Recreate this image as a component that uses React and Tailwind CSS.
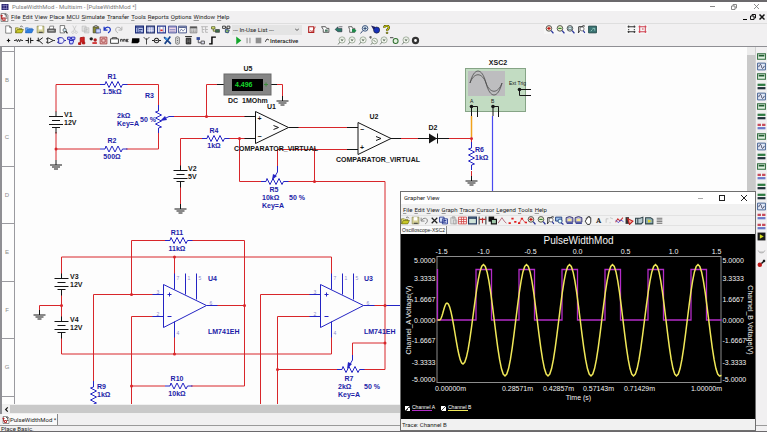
import React from "react";

/* ---------- toolbar glyphs, drawn on a 16 x 16 grid ---------- */

const glyphs = {
  page: <path d="M3 1.5h7l3 3v10H3z M10 1.5v3h3" fill="#fff" stroke="#333" />,
  open: (
    <>
      <path d="M1 14V5h5l1 1h5v3" fill="#e8e070" stroke="#555500" />
      <path d="M1 14l3-6h11l-3 6z" fill="#c8c828" stroke="#555500" />
      <path d="M9 3c2-2 4-1 5 1" fill="none" stroke="#222" />
    </>
  ),
  openBlue: (
    <>
      <path d="M1 14V5h5l1 1h6v3" fill="#7fb2ee" stroke="#1f5fb8" />
      <path d="M1 14l3-6h11l-3 6z" fill="#2f7fe0" stroke="#1f5fb8" />
    </>
  ),
  save: (
    <>
      <path d="M2 2h12v12H2z" fill="#d8d49a" stroke="#77773a" />
      <path d="M5 2h6v6H5z" fill="#fff" />
      <path d="M5 12h7v2H5z" fill="#444" />
    </>
  ),
  print: (
    <>
      <path d="M4 7l1-5h7l-1 5" fill="#fff" stroke="#333" />
      <path d="M1 7h14v6H1z" fill="#777" stroke="#222" />
      <path d="M3 10h9" stroke="#eee" />
    </>
  ),
  preview: (
    <>
      <path d="M2 1h8v13H2z" fill="#fff" stroke="#222" />
      <circle cx="10" cy="9" r="3" fill="#cfe9f5" stroke="#222" />
      <path d="M12 11l3 4" stroke="#222" strokeWidth="2" />
    </>
  ),
  cut: <path d="M5 1l5 10M11 1L6 11M5 11a2 2 0 1 0 .1 0M11 11a2 2 0 1 0 .1 0" fill="none" stroke="#b5b5b5" />,
  copyGrey: <path d="M2 2h7v9H2zM6 5h8v9H6zM8 8h4M8 11h4" fill="#e4e4e4" stroke="#b0b0b0" />,
  copy: <path d="M1 2h8v9H1zM6 5h9v9H6zM8 8h5M8 11h5" fill="#dfe8ff" stroke="#1d2f8a" strokeWidth="1.5" />,
  paste: (
    <>
      <path d="M2 3h10v11H2z" fill="#8a8a30" stroke="#33331a" />
      <path d="M5 1h4v3H5z" fill="#ddd" stroke="#333" />
      <path d="M7 7h8v7H7z" fill="#ccd6ff" stroke="#1d2f8a" />
    </>
  ),
  undo: <path d="M2 3v6h6M3 8c2-6 11-5 10 1c0 2-2 4-4 5" fill="none" stroke="#1a34c4" strokeWidth="2.2" />,
  undoGrey: <path d="M2 3v6h6M3 8c2-6 11-5 10 1c0 2-2 4-4 5" fill="none" stroke="#777" strokeWidth="1.5" />,
  redo: <path d="M14 3v6H8M13 8c-2-6-11-5-10 1c0 2 2 4 4 5" fill="none" stroke="#aaa" strokeWidth="1.6" />,
  winBlue: (
    <>
      <path d="M1 2h14v12H1z" fill="#b8c6ee" stroke="#1c2c78" strokeWidth="2" />
      <path d="M1 4h14M5 5v9M7 8h6M7 11h4" stroke="#1c2c78" strokeWidth="1.5" />
    </>
  ),
  appIcon: (
    <>
      <path d="M1 2h14v12H1z" fill="#2b2670" />
      <path d="M3 5h10M3 11h10M6 3v10M11 3v10" stroke="#8c88c4" strokeWidth="1.4" />
    </>
  ),
  winSheet: (
    <>
      <path d="M1 2h14v12H1z" fill="#8f9ad0" stroke="#26346e" strokeWidth="2" />
      <path d="M2 7h12M2 10h12M6 4v9M10 4v9" stroke="#fff" />
    </>
  ),
  winRed: (
    <>
      <path d="M1 2h14v12H1z" fill="#fff" stroke="#2a3a90" strokeWidth="2" />
      <path d="M5 3v11M11 3v11" stroke="#2a3a90" />
      <path d="M6 8h4v3H6z" fill="#d22" />
    </>
  ),
  winPink: (
    <>
      <path d="M1 2h14v12H1z" fill="#ecd6e6" stroke="#2a3a90" strokeWidth="1.5" />
      <path d="M2 4h12M3 8h10M3 11h10" stroke="#5a63b0" />
    </>
  ),
  winGraph: (
    <>
      <path d="M1 2h14v12H1z" fill="#fff" stroke="#30407a" strokeWidth="1.5" />
      <path d="M2 4h12" stroke="#30407a" strokeWidth="2" />
      <path d="M3 12l3-5 3 4 4-5" fill="none" stroke="#30407a" />
    </>
  ),
  calc: (
    <>
      <path d="M2 3h12v11H2z" fill="#ddd" stroke="#555" />
      <path d="M2 3h12v3H2z" fill="#555" />
      <path d="M4 9h8M4 12h8" stroke="#555" strokeDasharray="2 1" />
    </>
  ),
  treeGrey: <path d="M2 3h12M4 3v5h4M10 3v10M4 8v5h3M10 8h4M10 13h4" fill="none" stroke="#b0b0b0" strokeWidth="1.5" />,
  partGreen: (
    <>
      <path d="M1 3h6v4H1zM4 7v4h4" fill="#e4e87a" stroke="#44531a" strokeWidth="1.3" />
      <path d="M8 8h7v5H8z" fill="#3d6e4e" stroke="#222" />
    </>
  ),
  partLink: (
    <>
      <path d="M1 2h5v4H1zM6 4l4 3M9 2h5v4H9z" fill="#fff" stroke="#222" strokeWidth="1.5" />
      <path d="M6 8l7 1-2 5-5-1z" fill="#8dbb6a" stroke="#223c7a" strokeWidth="1.5" />
    </>
  ),
  erc: (
    <>
      <path d="M3 3h9v10H3z" fill="#fff" stroke="#b02020" strokeWidth="2" />
      <path d="M6 9l3 3 6-9" fill="none" stroke="#c03030" strokeWidth="1.5" />
    </>
  ),
  design: (
    <>
      <path d="M2 1h9l3 3v11H2z" fill="#fff" stroke="#555" strokeWidth="1.2" />
      <path d="M1 5h4M3 3v8M5 9h4v4H5z" fill="none" stroke="#b02020" strokeWidth="1.8" />
      <path d="M8 3h3v4M10 9h3" fill="none" stroke="#222" strokeWidth="1.4" />
    </>
  ),
  transfer: (
    <>
      <path d="M1 3h7l2 3h4v7H4V8z" fill="#fff" stroke="#333" strokeWidth="1.4" />
      <path d="M7 8h5v4H7z" fill="#4f7a66" />
    </>
  ),
  transferGreen: (
    <>
      <path d="M2 8l5-5v3h7v6H7z" fill="#2a7a68" stroke="#223" />
      <path d="M9 3h6" stroke="#223" />
    </>
  ),
  transferRight: (
    <>
      <path d="M1 3h6l1 3h4v7H3V8z" fill="#fff" stroke="#333" strokeWidth="1.3" />
      <path d="M7 7h5l3 3-3 3H7z" fill="#1f8a4a" />
    </>
  ),
  find: (
    <>
      <circle cx="9" cy="6" r="5" fill="#e6f3f8" stroke="#223c6a" strokeWidth="1.5" />
      <path d="M6 6h6M9 3v6M5 10l-4 5" stroke="#223c6a" strokeWidth="1.6" />
    </>
  ),
  globe: (
    <>
      <path d="M0 1l7 2 1 4-4 1z" fill="#226" />
      <circle cx="10" cy="9" r="5.5" fill="#1730b8" stroke="#112" />
    </>
  ),
  help: (
    <>
      <path d="M4 5c0-5 9-5 8 0c0 3-3 2-3 5" fill="none" stroke="#3c3c00" strokeWidth="4" />
      <path d="M4 5c0-5 9-5 8 0c0 3-3 2-3 5" fill="none" stroke="#cccc10" strokeWidth="2" />
      <circle cx="9" cy="14" r="1.6" fill="#aaaa10" stroke="#3c3c00" />
    </>
  ),
  zoomIn: (
    <>
      <circle cx="7" cy="6" r="5" fill="#f4eed8" stroke="#333" strokeWidth="1.4" />
      <path d="M4 6h6M7 3v6" stroke="#c01818" strokeWidth="2" />
      <path d="M11 10l4 5" stroke="#26309a" strokeWidth="2.4" />
    </>
  ),
  zoomOut: (
    <>
      <circle cx="7" cy="6" r="5" fill="#eef4cc" stroke="#333" strokeWidth="1.4" />
      <path d="M4 6h6" stroke="#2c7a2c" strokeWidth="2" />
      <path d="M11 10l4 5" stroke="#26309a" strokeWidth="2.4" />
    </>
  ),
  zoomArea: (
    <>
      <circle cx="7" cy="6" r="5" fill="#ddeaf0" stroke="#333" strokeWidth="1.4" />
      <path d="M4 4h6v4H4z" fill="none" stroke="#355" />
      <path d="M11 10l4 5" stroke="#26309a" strokeWidth="2.4" />
    </>
  ),
  zoomPage: (
    <>
      <path d="M3 14V3h8M10 1l4 1M2 14l3-4" fill="none" stroke="#222" strokeWidth="1.6" />
      <circle cx="9" cy="7" r="3.6" fill="#fff" stroke="#222" />
      <path d="M11 10l3 4" stroke="#26309a" strokeWidth="2" />
    </>
  ),
  fullscreen: (
    <>
      <path d="M1 2h14v12H1z" fill="#3b7474" stroke="#1d4444" strokeWidth="1.5" />
      <path d="M8 6h4M12 6v4M5 11l3-3" stroke="#cfe" />
    </>
  ),
  pinsDark: <path d="M1 3h14M1 12h14M3 1v4M13 1v4M3 7v2M13 7v2M3 10v4M13 10v4" stroke="#333" strokeWidth="1.8" />,
  pinsRed: <path d="M1 3h14M1 12h14M3 1v13M13 1v13M7 7h3" stroke="#d04050" strokeWidth="1.8" />,
  source: <path d="M8 5v6M5 8h6" stroke="#111" strokeWidth="2" />,
  resistor: <path d="M0 8h3l1-2 2 4 2-4 2 4 2-4 1 2h3" fill="none" stroke="#111" strokeWidth="1.5" />,
  capacitor: <path d="M1 8h5M6 3v10M10 3v10M10 8h5" stroke="#111" strokeWidth="1.7" />,
  diode: <path d="M12 3L5 8l7 6M4 3v7M5 8H1" fill="none" stroke="#111" strokeWidth="1.7" />,
  opamp: <path d="M3 3l10 5-10 5zM0 5h3M0 11h3M13 8h3" fill="#fff" stroke="#111" strokeWidth="1.5" />,
  gate: <path d="M3 3h5c6 1 6 9 0 10H3zM0 5h3M0 11h3M13 8h3" fill="#eef" stroke="#1818a8" strokeWidth="1.6" />,
  gates: <path d="M1 2h5v4H1zM8 2h6v4H8zM4 8h8l-2 6H5z" fill="#cdd4ff" stroke="#2424b8" strokeWidth="1.7" />,
  note: <path d="M4 12V3l7-1v9M1 12h4v3H1zM8 11h4v3H8z" fill="#c22" stroke="#a11" strokeWidth="1.6" />,
  dots: (
    <>
      <circle cx="4" cy="5" r="3" fill="#222" />
      <circle cx="11" cy="7" r="3" fill="#a22" />
      <path d="M6 11h8v3H6z" fill="#c22" />
    </>
  ),
  chipRed: <path d="M2 2h12v12H2zM5 5h6v6H5z" fill="#f0caca" stroke="#a03838" strokeWidth="1.5" />,
  box: <path d="M1 5h14v8H1zM4 5V3h8v2" fill="#fff" stroke="#333" strokeWidth="1.6" />,
  misc: <path d="M1 10V6h3v4M6 10V6h3v4M11 10V6h4M11 8h3M11 10h4" fill="none" stroke="#222" strokeWidth="1.5" />,
  chipBlack: <path d="M2 4h13v6l-3 3H1z" fill="#000" />,
  antenna: <path d="M8 15V4M3 2l5 5 5-5" fill="none" stroke="#333" strokeWidth="1.6" />,
  motor: <path d="M0 8h4M12 8h4M8 4a4 4 0 1 0 .1 0M6 8h4" fill="none" stroke="#222" strokeWidth="1.8" />,
  ni: (
    <>
      <path d="M2 2l12 12M13 1L3 14" stroke="#18428a" strokeWidth="3" />
      <path d="M4 3h4v4H4z" fill="#3c9ae8" />
    </>
  ),
  connector: <path d="M5 3c0-2 6-2 6 0v10c0 2-6 2-6 0zM7 5h2M7 8h2M7 11h2" fill="#fff" stroke="#444" strokeWidth="1.4" />,
  mcu: <path d="M2 1h12M4 4h8v10H4zM6 7h4M6 11h4" fill="#777" stroke="#111" strokeWidth="1.6" />,
  hierarchy: (
    <>
      <path d="M1 2h6v5H1z" fill="#334a9a" />
      <path d="M4 7v5h5M9 9h6v5H9z" fill="#dde" stroke="#444" strokeWidth="1.5" />
    </>
  ),
  bus: <path d="M2 14h5V2h7" fill="none" stroke="#000" strokeWidth="2.6" />,
  play: <path d="M4 1v14l9-7z" fill="#12a52a" />,
  pause: <path d="M4 3h3v10H4zM9 3h3v10H9z" fill="#b5b5b5" />,
  stop: <path d="M3 3h10v10H3z" fill="#8e8e8e" />,
  probe: (
    <>
      <circle cx="9" cy="7" r="5.5" fill="#f2f6ee" stroke="#8a9a86" strokeWidth="1.3" />
      <path d="M5 11l-3 4M7 5l2 4 2-4" fill="none" stroke="#4a5a4a" strokeWidth="1.3" />
    </>
  ),
  probeDiff: (
    <>
      <path d="M0 2h5M3 0v5" stroke="#444" strokeWidth="1.4" />
      <circle cx="10" cy="9" r="5" fill="#f2f6ee" stroke="#7a8a76" strokeWidth="1.3" />
      <path d="M6 13l-3 2M8 7l4 4" stroke="#4a5a4a" strokeWidth="1.3" />
    </>
  ),
  probeRef: (
    <>
      <path d="M0 3h6" stroke="#333" strokeWidth="1.6" />
      <circle cx="10" cy="9" r="4.4" fill="#e4f2e0" stroke="#2e6e2e" strokeWidth="1.8" />
    </>
  ),
  gear: <circle cx="8" cy="8" r="4.5" fill="#fff" stroke="#333" strokeWidth="4" />,
  xMark: <path d="M3 3l10 10M13 3L3 13" stroke="#222" strokeWidth="2.2" />,
  pasteGrey: <path d="M3 3h9v11H3zM6 1h4v3H6zM8 7h6v7H8z" fill="#ddd" stroke="#999" />,
  gridRed: <path d="M1 2h14v12H1zM1 6h14M1 10h14M6 2v12M10 2v12" fill="#fff" stroke="#d03a3a" strokeWidth="1.4" />,
  legend: (
    <>
      <path d="M1 2h14v12H1z" fill="#cfe2d8" stroke="#243a5e" strokeWidth="2" />
      <path d="M1 4h14" stroke="#243a5e" strokeWidth="2" />
    </>
  ),
  cursors: (
    <>
      <path d="M2 1v14M14 1v14" stroke="#222" strokeWidth="1.7" />
      <path d="M2 6h12M8 3v10" stroke="#b33" strokeWidth="2" />
    </>
  ),
  invert: (
    <>
      <path d="M1 1h10v9H1z" fill="#111" />
      <path d="M6 6h9v8H6z" fill="#9fc8a8" stroke="#111" strokeWidth="2" />
    </>
  ),
  trace: <path d="M0 13L7 3l4 6 4 4" fill="none" stroke="#b06070" strokeWidth="1.6" />,
  points: <path d="M1 11h4v3H1zM6 3h4v3H6zM11 9h4v3h-4z" fill="#e02020" />,
  tracePoints: (
    <>
      <path d="M2 13L7 4l4 6 4 2" fill="none" stroke="#e02020" strokeWidth="1.2" />
      <path d="M5 3h4v3H5zM0 11h4v3H0zM12 10h4v3h-4z" fill="#e02020" />
    </>
  ),
  zoomX: (
    <>
      <path d="M1 2h11v7H1z" fill="#9cc0e8" stroke="#1d3a7a" strokeWidth="1.6" />
      <circle cx="9" cy="9" r="3.6" fill="#dff" stroke="#1d3a7a" strokeWidth="1.5" />
      <path d="M11 12l4 3" stroke="#26309a" strokeWidth="2" />
    </>
  ),
  zoomY: (
    <>
      <path d="M2 3l6-2 6 2v8H2z" fill="#b8b6d8" stroke="#2a2a6a" strokeWidth="1.6" />
      <path d="M5 5h6v4H5z" fill="#f6e78a" />
      <path d="M3 13h11" stroke="#26309a" strokeWidth="2" />
    </>
  ),
  hand: <path d="M4 7V4h2V2h2V1h2v2h2v8l-2 4H6l-4-6z" fill="#fff" stroke="#222" strokeWidth="1.6" />,
  letterLine: <path d="M2 12V5h4M9 3l5 2M8 12h2" fill="none" stroke="#bbb" strokeWidth="1.4" />,
  waves: (
    <>
      <path d="M1 11l4-6 4 4 5-6" fill="none" stroke="#c33" strokeWidth="1.8" />
      <path d="M1 7l5 5 4-5 5 3" fill="none" stroke="#44c" strokeWidth="1.5" />
    </>
  ),
  exportRed: (
    <>
      <path d="M1 2h6v12H1z" fill="#333" />
      <path d="M5 5l9 4-6 6z" fill="#f6b6a6" stroke="#c22020" strokeWidth="2" />
    </>
  ),
  exportGrey: <path d="M1 4h8l5-2v9l-3 3H1zM5 4v10" fill="#b9cbd0" stroke="#2f4248" strokeWidth="1.8" />,
  exportYellow: (
    <>
      <path d="M1 3h9l4 3v8H1z" fill="#8fb0b4" stroke="#2f4248" strokeWidth="1.8" />
      <path d="M5 6l7 3-6 3z" fill="#e8d820" />
    </>
  ),
  list: <path d="M3 4h10M3 7h10M3 10h10M3 13h10" stroke="#666" strokeWidth="1.6" />,
  meter: (
    <>
      <path d="M1 3h14v10H1z" fill="#dff0e0" stroke="#2f6a3c" strokeWidth="1.8" />
      <path d="M3 5h10v3H3z" fill="#1f5a2e" />
    </>
  ),
  bars: (
    <>
      <path d="M1 3h14v4H1z" fill="#2d7a42" />
      <path d="M1 9h14v4H1z" fill="#20303a" />
    </>
  ),
  scope: (
    <>
      <path d="M1 2h14v12H1z" fill="#dfe7f6" stroke="#3a5a8c" strokeWidth="1.6" />
      <path d="M3 9c2-6 4-6 5-1s3 4 5-1" fill="none" stroke="#224" strokeWidth="1.4" />
    </>
  ),
  analyzer: (
    <>
      <path d="M1 3h6v4H1zM9 3h6v4H9z" fill="#c84a5a" />
      <path d="M1 9h14v4H1z" fill="#6a7ac8" />
    </>
  ),
  labview: (
    <>
      <path d="M1 1h14v14H1z" fill="#1a1a1a" />
      <path d="M5 4v8l7-4z" fill="#d8e020" />
    </>
  ),
  clip: <path d="M2 6c2 6 10 6 12 0M4 9h8" fill="none" stroke="#aaa" strokeWidth="1.5" />,
  currentProbe: (
    <>
      <circle cx="5" cy="10" r="4" fill="#c01818" />
      <path d="M8 8l6-6M11 2l3 3" stroke="#111" strokeWidth="2.6" />
    </>
  ),
};

function Glyph({ name, className = "h-[9px] w-[9px]" }) {
  return (
    <svg viewBox="0 0 16 16" className={`${className} shrink-0`} aria-hidden="true">
      {glyphs[name]}
    </svg>
  );
}

function Tools({ names, className }) {
  return (
    <div className={`flex shrink-0 items-center ${className}`}>
      {names.map((name, i) => (
        <button key={i} type="button" aria-label={name} className="flex min-w-0 flex-1 items-center justify-center">
          <Glyph name={name} />
        </button>
      ))}
    </div>
  );
}

function MenuBar({ items, className }) {
  return (
    <nav className={`flex items-center gap-[2px] ${className}`}>
      {items.map((item) => (
        <button key={item} type="button" className="shrink-0">
          <span className="underline decoration-[#999] decoration-1">{item[0]}</span>
          {item.slice(1)}
        </button>
      ))}
    </nav>
  );
}

/* ---------- schematic parts ---------- */

const RED = "#d8262a";
const BLUE = "#2424c4";
const INK = "#151515";

const Wire = ({ d, color = RED }) => <path d={d} fill="none" stroke={color} />;
const Dot = ({ x, y }) => <circle cx={x} cy={y} r="1.5" fill={RED} />;

function Label({ x, y, children, color = "#1c1ca8", middle }) {
  return (
    <text x={x} y={y} fill={color} textAnchor={middle ? "middle" : "start"} stroke="none">
      {children}
    </text>
  );
}

function ResistorH({ x, y }) {
  return <path d={`M${x} ${y}h5l1 -3l3 6l3 -6l3 6l3 -6l3 6l1.500 -3h5`} fill="none" stroke={BLUE} />;
}

function ResistorV({ x, y }) {
  return <path d={`M${x} ${y}v6l-3 1l6 3l-6 3l6 3l-6 3l6 3l-3 1v5`} fill="none" stroke={BLUE} />;
}

function Battery({ x, y }) {
  return (
    <path
      d={`M${x} ${y - 5}v5M${x - 7} ${y}h14M${x - 4} ${y + 4}h8M${x - 7} ${y + 8}h14M${x - 4} ${y + 11}h8M${x} ${y + 11}v6`}
      fill="none"
      stroke={INK}
    />
  );
}

function Ground({ x, y }) {
  return <path d={`M${x} ${y - 5}v5M${x - 6} ${y}h12M${x - 4} ${y + 2}h8M${x - 2} ${y + 4}h4`} fill="none" stroke={INK} />;
}

function Comparator({ x, y, top, bottom }) {
  return (
    <g stroke={INK} fill="none">
      <path d={`M${x} ${y - 16}v32l33 -16zM${x - 11} ${y - 11}h11M${x - 11} ${y + 11}h11M${x + 33} ${y}h10M${x + 18} ${y - 2}l5 2l-5 2`} />
      <Label x={x + 2} y={y - 7} color={INK}>{top}</Label>
      <Label x={x + 2} y={y + 11} color={INK}>{bottom}</Label>
    </g>
  );
}

function OpAmp({ x, y }) {
  return (
    <g stroke={BLUE} fill="none">
      <path
        d={`M${x} ${y - 21}v43l43 -22zM${x - 11} ${y - 11}h11M${x - 11} ${y + 11}h11M${x + 43} ${y}h11M${x + 11} ${y - 32}v16M${x + 22} ${y - 32}v21M${x + 33} ${y - 32}v26M${x + 11} ${y + 16}v16`}
      />
      <path d={`M${x + 4} ${y - 11}h4M${x + 6} ${y - 13}v4M${x + 4} ${y + 11}h4`} />
      <g className="text-[5px] font-normal" stroke="none" fill="#8a8ad0">
        <text x={x + 13} y={y - 26}>7</text>
        <text x={x + 24} y={y - 26}>1</text>
        <text x={x + 35} y={y - 26}>5</text>
        <text x={x - 7} y={y - 12}>3</text>
        <text x={x - 7} y={y + 10}>2</text>
        <text x={x + 13} y={y + 29}>4</text>
        <text x={x + 46} y={y - 1}>6</text>
      </g>
    </g>
  );
}

const rulerMarks = [
  [51, "B"],
  [108, "C"],
  [166, "D"],
  [223, "E"],
  [281, "F"],
  [338, "G"],
];

function Schematic() {
  return (
    <svg viewBox="2 47 745 357" className="block h-[357px] w-[745px] shrink-0 font-['Liberation_Sans',sans-serif] text-[7px] font-bold" role="img" aria-label="Circuit schematic">
      <g stroke="#9a9a9f">
        <path d="M14.500 47v357" />
        <path d="M2 51.500h12M2 108.500h12M2 166.500h12M2 223.500h12M2 281.500h12M2 338.500h12M2 396.500h12" />
      </g>
      <g fill="#8a8a8a" className="text-[6px] font-normal">
        {rulerMarks.map(([y, name]) => (
          <text key={name} x="7" y={y + 31} textAnchor="middle">{name}</text>
        ))}
      </g>

      {/* divider */}
      <Wire d="M56 112V84.500H100M126 84.500H158.500V106M56 132V160M56 149H100M126 149H158.500V131" />
      <Battery x={56} y={116.5} />
      <Ground x={56} y={165} />
      <Dot x={56} y={149} />
      <ResistorH x={100} y={84.5} />
      <ResistorH x={100} y={149} />
      <ResistorV x={158.5} y={105} />
      <path d="M174 116.500h-5l-4 2" fill="none" stroke={BLUE} />
      <path d="M160 121l5 -5l2 4z" fill={BLUE} />
      <Label x={112} y={79} middle>R1</Label>
      <Label x={112} y={94} middle>1.5kΩ</Label>
      <Label x={145} y={98}>R3</Label>
      <Label x={117} y={118}>2kΩ</Label>
      <Label x={117} y={126}>Key=A</Label>
      <Label x={140} y={122}>50 %</Label>
      <Label x={112} y={143} middle>R2</Label>
      <Label x={112} y={159} middle>500Ω</Label>
      <Label x={64} y={117} color={INK}>V1</Label>
      <Label x={64} y={125} color={INK}>12V</Label>

      {/* voltmeter */}
      <Wire d="M174 116.500H245M206.500 116.500V84.500H217M277 84.500H282.500V96" />
      <Wire d="M217 84.500h7M271 84.500h6" color={INK} />
      <Dot x={206.5} y={116.5} />
      <rect x="224" y="74" width="47" height="21" fill="#858585" stroke="#6a6a6a" />
      <rect x="232" y="79" width="31" height="12" fill="#000" />
      <text x="235" y="87" fill="#18d82c" className="text-[7px]">4.496</text>
      <path d="M264 84.500h4M266 82.500v4" stroke="#3c8a3c" />
      <Ground x={282.5} y={101} />
      <Label x={248} y={71} color={INK} middle>U5</Label>
      <Label x={228} y={103} color={INK}>DC&#160; 1MOhm</Label>
      <Label x={267} y={109} color={INK}>U1</Label>

      {/* comparators */}
      <Wire d="M180.500 166V138.500H202M228 138.500H245M239.500 138.500V181.500H261M287 181.500H385V369.500H363M277.500 166V149.500H347M314.500 149.500V181.500M298 127.500H347M401 138.500H418M449 138.500H471.500V143M471.500 171V177M180.500 187V204" />
      <Battery x={180.5} y={170.5} />
      <Ground x={180.5} y={209} />
      <ResistorH x={202} y={138.5} />
      <Dot x={239.5} y={138.5} />
      <Dot x={314.5} y={149.5} />
      <Dot x={314.5} y={181.5} />
      <Dot x={471.5} y={138.5} />
      <Comparator x={255.500} y={127.500} top="+" bottom="−" />
      <Comparator x={358} y={138.500} top="−" bottom="+" />
      <ResistorH x={261} y={181.5} />
      <path d="M277.500 166v6l-3 5" fill="none" stroke={BLUE} />
      <path d="M272 180l1 -6l4 2z" fill={BLUE} />
      <Label x={214} y={133} middle>R4</Label>
      <Label x={214} y={148} middle>1kΩ</Label>
      <Label x={188} y={171} color={INK}>V2</Label>
      <Label x={188} y={179} color={INK}>5V</Label>
      <Label x={234} y={151} color={INK}>COMPARATOR_VIRTUAL</Label>
      <Label x={374} y={119} color={INK} middle>U2</Label>
      <Label x={336} y={162} color={INK}>COMPARATOR_VIRTUAL</Label>
      <Label x={274} y={192} middle>R5</Label>
      <Label x={262} y={200}>10kΩ</Label>
      <Label x={289} y={200}>50 %</Label>
      <Label x={262} y={208}>Key=A</Label>

      {/* diode, load and oscilloscope */}
      <Wire d="M418 138.500H449M437.500 133.500v10" color={INK} />
      <path d="M429 133.500v10l8 -5z" fill={INK} />
      <ResistorV x={471.5} y={142} />
      <Ground x={471.5} y={181} />
      <Label x={433} y={130} color={INK} middle>D2</Label>
      <Label x={475} y={152}>R6</Label>
      <Label x={475} y={160}>1kΩ</Label>
      <Label x={498} y={65} color={INK} middle>XSC2</Label>
      <rect x="465.500" y="68.500" width="60" height="43" fill="#c2dcc2" stroke="#86a486" />
      <rect x="468" y="71" width="37" height="25" fill="#bdbdbf" />
      <path d="M470 83c4 -16 12 -16 16 0s12 16 16 0M470 83c4 -11 12 -11 16 0s12 11 16 0" fill="none" stroke="#4a4a4a" strokeWidth="0.800" />
      <g className="text-[5px] font-normal" fill={INK}>
        <text x="509" y="85">Ext Trig</text>
        <text x="470" y="103">A</text>
        <text x="491" y="103">B</text>
      </g>
      <path d="M531 89.500H519.500V95.500H531M471.500 106V116M473 106.500h4.500V117M493 106V116M494 106.500h4.500V117" fill="none" stroke={INK} />
      <circle cx="471.500" cy="106.500" r="1.800" fill={INK} />
      <circle cx="493" cy="106.500" r="1.800" fill={INK} />
      <circle cx="519.500" cy="89.500" r="1.800" fill={INK} />
      <path d="M471.500 116V137" stroke="#f0a21c" strokeWidth="1.500" />
      <path d="M492.500 116V192" stroke="#4a4af0" strokeWidth="1.200" />

      {/* dual supply */}
      <Wire d="M61.500 274V257H331.500V274M61.500 294V317M61.500 305.500H39.500V310M61.500 338V354H331.500V337M174.500 257V274M174.500 337V354" />
      <Battery x={61.5} y={278.5} />
      <Battery x={61.5} y={321.5} />
      <Ground x={39.5} y={315} />
      <Dot x={61.5} y={305.5} />
      <Dot x={174.5} y={257} />
      <Dot x={174.5} y={354} />
      <Label x={70} y={279} color={INK}>V3</Label>
      <Label x={70} y={287} color={INK}>12V</Label>
      <Label x={70} y={322} color={INK}>V4</Label>
      <Label x={70} y={330} color={INK}>12V</Label>

      {/* first op-amp stage */}
      <Wire d="M165 240.500H131.500V294.500M191 240.500H244.500V386H191M153 294.500H93.500V382M153 316.500H131.500V404M131.500 386H165M217 305.500H244.500" />
      <OpAmp x={163.500} y={305.500} />
      <ResistorH x={165} y={240.5} />
      <ResistorH x={165} y={386} />
      <ResistorV x={93.5} y={381} />
      <Dot x={131.5} y={294.5} />
      <Dot x={244.5} y={305.5} />
      <Dot x={131.5} y={386} />
      <Label x={177} y={235} middle>R11</Label>
      <Label x={177} y={251} middle>11kΩ</Label>
      <Label x={208} y={281}>U4</Label>
      <Label x={208} y={334}>LM741EH</Label>
      <Label x={177} y={381} middle>R10</Label>
      <Label x={177} y={396} middle>10kΩ</Label>
      <Label x={97} y={389}>R9</Label>
      <Label x={97} y={397}>1kΩ</Label>

      {/* second op-amp stage */}
      <Wire d="M310 294.500H260.500V404M310 316.500H277.500V404M277.500 369.500H337M352.500 355V343H385M374 305.500H385" />
      <Wire d="M385 305.500H402" color={BLUE} />
      <OpAmp x={320.500} y={305.500} />
      <ResistorH x={337} y={369.5} />
      <path d="M352.500 355v5l-3 5" fill="none" stroke={BLUE} />
      <path d="M347 369l1 -7l4 2z" fill={BLUE} />
      <Dot x={277.5} y={369.5} />
      <Dot x={385} y={305.5} />
      <Dot x={385} y={343} />
      <Label x={364} y={281}>U3</Label>
      <Label x={364} y={334}>LM741EH</Label>
      <Label x={349} y={381} middle>R7</Label>
      <Label x={338} y={389}>2kΩ</Label>
      <Label x={364} y={389}>50 %</Label>
      <Label x={338} y={397}>Key=A</Label>
    </svg>
  );
}

/* ---------- grapher ---------- */

const turningPoints = [
  [437, 320], [439, 320], [446.5, 303], [462.5, 364], [483, 264.5], [504.5, 376],
  [526, 264.5], [547.5, 376], [569, 264.5], [590.5, 376], [612, 264.5],
  [633, 376], [655, 264.5], [676, 376], [697.5, 264.5], [719, 376], [721, 375.5],
];

function waveform() {
  const pts = [];
  for (let i = 0; i < turningPoints.length - 1; i++) {
    const [x0, y0] = turningPoints[i];
    const [x1, y1] = turningPoints[i + 1];
    for (let s = 0; s <= 12; s++) {
      const t = s / 12;
      pts.push(`${(x0 + (x1 - x0) * t).toFixed(2)},${(y0 + ((y1 - y0) * (1 - Math.cos(Math.PI * t))) / 2).toFixed(2)}`);
    }
  }
  return pts.join(" ");
}

const pulses = [475.5, 518.5, 561.5, 604.5, 647.5, 690.5].map((x) => `H${x}V269.5H${x + 15.5}V320`).join("");

const topTicks = [["-1.5", 441], ["-1.0", 483], ["-0.5", 530], ["0.0", 577], ["0.5", 625], ["1.0", 673], ["1.5", 716]];
const sideTicks = [["5.0000", 263], ["3.3333", 281], ["1.6667", 302], ["0.0000", 323], ["-1.6667", 343], ["-3.3333", 365], ["-5.0000", 382]];
const timeTicks = [["0.00000m", 450], ["0.28571m", 517], ["0.42857m", 558], ["0.57143m", 598], ["0.71429m", 639], ["1.00000m", 706]];

function Plot() {
  return (
    <svg viewBox="401 234 353 168" className="block h-[168px] w-full font-['Liberation_Sans',sans-serif] text-[7px]" fill="#f2f2f2" role="img" aria-label="PulseWidthMod plot">
      <text x="578" y="244" textAnchor="middle" className="text-[10px]">PulseWidthMod</text>
      {topTicks.map(([t, x]) => (
        <text key={t} x={x} y="254" textAnchor="middle">{t}</text>
      ))}
      {sideTicks.map(([t, y]) => (
        <g key={t}>
          <text x="435" y={y} textAnchor="end">{t}</text>
          <text x="722" y={y}>{t}</text>
        </g>
      ))}
      {timeTicks.map(([t, x]) => (
        <text key={t} x={x} y="391" textAnchor="middle">{t}</text>
      ))}
      <text x="578" y="400" textAnchor="middle">Time (s)</text>
      <text textAnchor="middle" transform="translate(410 320) rotate(-90)">Channel_A Voltage(V)</text>
      <text textAnchor="middle" transform="translate(747 320) rotate(90)">Channel_B Voltage(V)</text>
      <rect x="436.500" y="256.500" width="284" height="126" fill="none" stroke="#8c8c8c" />
      <path d={`M437 269V320${pulses}H721`} fill="none" stroke="#b42cc8" strokeWidth="1.300" />
      <polyline points={waveform()} fill="none" stroke="#f0e858" strokeWidth="1.500" />
    </svg>
  );
}

function Channel({ id, label, line }) {
  return (
    <div className="flex w-[36px] items-center gap-[2px]">
      <input
        id={id}
        type="checkbox"
        defaultChecked
        className="h-[5px] w-[5px] shrink-0 appearance-none bg-white checked:bg-[linear-gradient(135deg,#fff_45%,#444_45%,#444_60%,#fff_60%)]"
      />
      <label htmlFor={id} className="font-['Liberation_Sans',sans-serif] text-[5px] leading-[5px] whitespace-nowrap text-white">
        {label}
        <span className={`block h-px w-[20px] ${line}`} />
      </label>
    </div>
  );
}

function Grapher() {
  return (
    <section className="absolute top-[189px] right-[11px] bottom-px left-[400px] flex flex-col border border-[#6f6f6f] bg-[#f1f1f1]" aria-label="Grapher View">
      <header className="flex h-[12px] shrink-0 items-center bg-white pl-[3px]">
        <h2 className="flex-1">Grapher View</h2>
        <button type="button" aria-label="Minimize" className="flex w-[22px] justify-center">
          <span className="h-px w-[5px] bg-[#aaa]" />
        </button>
        <button type="button" aria-label="Maximize" className="flex w-[22px] justify-center">
          <span className="h-[6px] w-[6px] border border-[#222]" />
        </button>
        <button type="button" aria-label="Close" className="flex w-[22px] justify-center">
          <svg viewBox="0 0 6 6" className="h-[6px] w-[6px]"><path d="M0 0l6 6M6 0L0 6" stroke="#222" /></svg>
        </button>
      </header>
      <MenuBar className="h-[11px] shrink-0 pl-[2px]" items={["File", "Edit", "View", "Graph", "Trace", "Cursor", "Legend", "Tools", "Help"]} />
      <div className="flex h-[11px] shrink-0 items-center border-y border-[#e2e2e2]">
        <Tools className="w-[57px]" names={["open", "save", "undoGrey", "xMark", "copy", "pasteGrey"]} />
        <Tools className="w-[39px]" names={["gridRed", "legend", "cursors", "invert"]} />
        <Tools className="w-[30px]" names={["trace", "points", "tracePoints"]} />
        <Tools className="w-[66px]" names={["zoomIn", "zoomOut", "zoomPage", "zoomX", "zoomY", "zoomY", "hand"]} />
        <button type="button" aria-label="Text" className="w-[11px] font-serif text-[8px] leading-[9px] font-bold">A</button>
        <Tools className="w-[30px]" names={["letterLine", "waves", "exportRed"]} />
        <Tools className="w-[20px]" names={["exportGrey", "exportYellow"]} />
        <Tools className="w-[10px]" names={["list"]} />
      </div>
      <div className="flex h-[8px] shrink-0 items-center">
        <button type="button" className="h-[8px] border-r border-[#888] bg-[#fafafa] px-px font-['Liberation_Sans',sans-serif] text-[5px] leading-[8px]">Oscilloscope-XSC2</button>
      </div>
      <div className="flex min-h-0 flex-1 flex-col bg-black">
        <Plot />
        <div className="flex items-center pt-[3px] pl-[4px]">
          <Channel id="channel-a" label="Channel A" line="bg-[#b42cc8]" />
          <Channel id="channel-b" label="Channel B" line="bg-[#f0e858]" />
        </div>
      </div>
      <footer className="h-[11px] shrink-0 pl-px leading-[12px]">Trace: Channel B</footer>
    </section>
  );
}

/* ---------- main window ---------- */

const instruments = [
  "meter", "scope", "meter", "bars", "scope", "meter", "bars", "analyzer", "meter", "scope",
  "bars", "meter", "analyzer", "bars", "bars", "scope", "analyzer", "analyzer", "labview",
];

export default function App() {
  return (
    <div className="relative flex h-screen flex-col overflow-hidden border-t-2 border-[#6b696c] bg-[#f1f0f1] font-[Roboto,'Liberation_Sans',sans-serif] text-[6px] leading-[8px] text-[#222]">
      <header className="flex h-[9px] shrink-0 items-center bg-white pl-px">
        <Glyph name="appIcon" className="h-[8px] w-[8px]" />
        <h1 className="flex-1 pl-[3px] text-[#777]">PulseWidthMod - Multisim - [PulseWidthMod *]</h1>
        <button type="button" aria-label="Minimize" className="flex w-[22px] justify-center">
          <span className="h-px w-[5px] bg-[#888]" />
        </button>
        <button type="button" aria-label="Restore" className="flex w-[22px] justify-center">
          <svg viewBox="0 0 6 6" className="h-[6px] w-[6px]"><path d="M.5 2h3.500v3.500H.5zM2 2V.5h3.500V4H4" fill="none" stroke="#888" /></svg>
        </button>
        <button type="button" aria-label="Close" className="flex w-[22px] justify-center">
          <svg viewBox="0 0 6 6" className="h-[5px] w-[5px]"><path d="M0 0l6 6M6 0L0 6" stroke="#777" /></svg>
        </button>
      </header>

      <div className="flex h-[12px] shrink-0 items-center">
        <Glyph name="design" />
        <MenuBar
          className="flex-1 pl-[2px]"
          items={["File", "Edit", "View", "Place", "MCU", "Simulate", "Transfer", "Tools", "Reports", "Options", "Window", "Help"]}
        />
        <div className="flex items-end gap-[3px] pr-[2px]">
          <button type="button" aria-label="Minimize document" className="h-px w-[4px] bg-black" />
          <button type="button" aria-label="Restore document">
            <svg viewBox="0 0 6 6" className="h-[6px] w-[6px]"><path d="M.5 2h3.500v3.500H.5zM2 2V.5h3.500V4H4" fill="none" stroke="#111" /></svg>
          </button>
          <button type="button" aria-label="Close document">
            <svg viewBox="0 0 6 6" className="h-[6px] w-[6px]"><path d="M.5 .5l5 5M5.500 .5l-5 5" stroke="#111" strokeWidth="1.500" /></svg>
          </button>
        </div>
      </div>

      <div className="flex h-[12px] shrink-0 items-center border-t border-[#dedede] pl-[3px]">
        <Tools className="w-[43px]" names={["page", "open", "openBlue", "save"]} />
        <Tools className="w-[23px]" names={["print", "preview"]} />
        <Tools className="w-[55px]" names={["cut", "copyGrey", "paste", "undo", "redo"]} />
        <Tools className="ml-[10px] w-[76px]" names={["winBlue", "winSheet", "winRed", "winPink", "winGraph", "calc", "treeGrey"]} />
        <Tools className="w-[22px]" names={["partGreen", "partLink"]} />
        <div className="relative flex w-[70px] shrink-0 items-center">
          <select aria-label="In-use list" className="h-[10px] w-full appearance-none bg-[#e4e4e4] pl-px">
            <option>--- In-Use List ---</option>
          </select>
          <svg viewBox="0 0 4 3" className="pointer-events-none absolute right-[3px] h-[3px] w-[4px]" aria-hidden="true">
            <path d="M0 .5l2 2l2 -2" fill="none" stroke="#555" />
          </svg>
        </div>
        <Tools className="ml-[3px] w-[54px]" names={["erc", "transfer", "transferGreen", "transferRight"]} />
        <Tools className="w-[33px]" names={["find", "globe", "help"]} />
        <Tools className="ml-[152px] w-[54px] bg-[#f6f6f6]" names={["zoomIn", "zoomOut", "zoomArea", "zoomPage", "fullscreen"]} />
        <Tools className="ml-[28px] w-[22px] bg-[#f6f6f6]" names={["pinsDark", "pinsRed"]} />
      </div>

      <div className="flex h-[11px] shrink-0 items-center pl-[3px]">
        <Tools
          className="w-[180px]"
          names={["source", "resistor", "capacitor", "diode", "opamp", "gate", "gates", "note", "dots", "chipRed", "box", "misc", "chipBlack", "antenna", "motor", "ni", "connector"]}
        />
        <Tools className="w-[35px]" names={["mcu", "hierarchy", "bus"]} />
        <Tools className="ml-[15px] w-[31px]" names={["play", "pause", "stop"]} />
        <button type="button" className="flex w-[71px] shrink-0 items-center gap-px pl-px font-medium">
          <svg viewBox="0 0 4 5" className="h-[5px] w-[4px]" aria-hidden="true">
            <path d="M0 4l2 -3l2 1" fill="none" stroke="#444" />
          </svg>
          Interactive
        </button>
        <Tools className="ml-px w-[85px]" names={["probe", "probe", "probe", "probeDiff", "probe", "probeRef", "probe", "gear"]} />
      </div>

      <main className="flex min-h-0 flex-1 border-t border-[#8f8f94]">
        <div className="flex min-w-0 flex-1 flex-col border-l-2 border-[#8f8f94]">
          <div className="flex min-h-0 flex-1">
            <div className="min-w-0 flex-1 overflow-hidden bg-[#fdfdfd]">
              <Schematic />
            </div>
            <div className="w-[8px] shrink-0 bg-[#ececec] pt-[8px]">
              <div className="h-full bg-[#c9c9c9]" />
            </div>
          </div>
          <div className="flex h-[10px] shrink-0 items-center bg-[#f0f0f0]">
            <button type="button" aria-label="Scroll left" className="flex w-[8px] justify-center">
              <svg viewBox="0 0 6 6" className="h-[5px] w-[5px]"><path d="M4.500 .5L2 3l2.500 2.500" fill="none" stroke="#111" strokeWidth="1.400" /></svg>
            </button>
            <div className="h-[8px] flex-1 bg-[#c9c9c9]" />
          </div>
        </div>
        <aside className="flex w-[12px] shrink-0 flex-col items-center gap-[6px] border-l border-[#d2d2d2] pt-[5px]">
          <div className="flex flex-col items-center gap-px">
            {instruments.map((name, i) => (
              <button key={i} type="button" aria-label={`${name} ${i + 1}`} className="flex">
                <Glyph name={name} />
              </button>
            ))}
          </div>
          <div className="flex flex-col items-center gap-[3px]">
            <button type="button" aria-label="Current clamp" className="flex"><Glyph name="clip" /></button>
            <button type="button" aria-label="Current probe" className="flex"><Glyph name="currentProbe" /></button>
          </div>
        </aside>
      </main>

      <div className="flex h-[12px] shrink-0 items-start border-b border-[#9a9a9a] pl-[2px]">
        <button type="button" className="flex h-[11px] items-center border-r border-[#888] bg-[#fafafa] pr-px">
          <Glyph name="design" className="h-[8px] w-[8px]" />
          PulseWidthMod *
        </button>
      </div>
      <footer className="h-[6px] shrink-0 overflow-hidden border-b border-[#6b696c] pl-px leading-[6px]">Place Basic.</footer>
      <Grapher />
    </div>
  );
}
